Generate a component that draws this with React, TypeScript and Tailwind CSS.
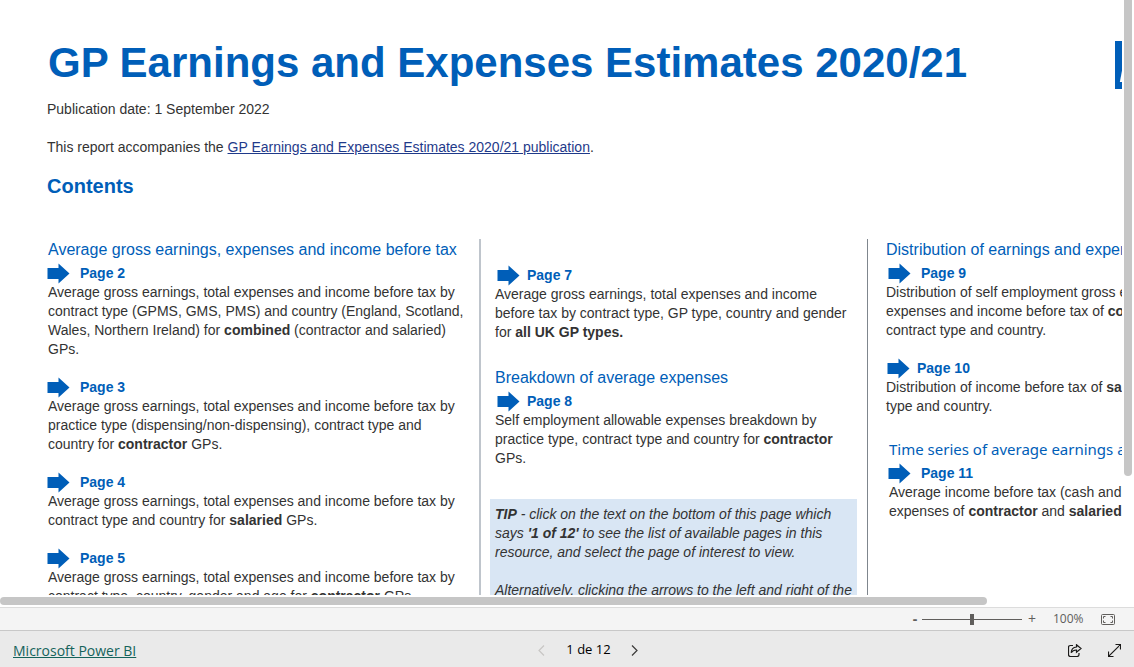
import type { ReactNode } from "react";

const Arrow = () => {
  return (
    <svg width="23" height="21" viewBox="0 0 23 21" aria-hidden="true" className="shrink-0">
      <path d="M0.5 5H11.5V0.5L22.5 10.5L11.5 20.5V16H0.5Z" fill="#005eb8" />
    </svg>
  );
};

const PageItem = ({ page, gap, children }: { page: number; gap: string; children: ReactNode }) => {
  return (
    <section>
      <button className={`flex h-[19px] items-center font-bold text-[#005eb8] ${gap}`}>
        <Arrow />
        <span>Page {page}</span>
      </button>
      <p>{children}</p>
    </section>
  );
};

const Report = () => {
  return (
    <main className="h-full w-[1280px] text-sm/[19px] text-[#333333]">
      <header className="flex justify-between pt-9 pl-12">
        <h1 className="text-[42px]/[54px] font-bold whitespace-nowrap text-[#005eb8]">
          GP Earnings and Expenses Estimates 2020/21
        </h1>
        <div className="mt-[5px] mr-11 h-12 w-[121px] bg-[#005eb8] pl-1 text-[50px]/[48px] font-bold text-white italic">
          NHS
        </div>
      </header>

      <div className="pt-[10px] pl-[47px]">
        <p>Publication date: 1 September 2022</p>
        <p className="mt-[19px]">
          This report accompanies the{" "}
          <a href="#publication" className="text-[#1f3a8a] underline">
            GP Earnings and Expenses Estimates 2020/21 publication
          </a>
          .
        </p>
        <h2 className="mt-4 text-xl/[26px] font-bold text-[#005eb8]">Contents</h2>
      </div>

      <div className="mt-10 grid h-[440px] grid-cols-[479px_388px_1fr] whitespace-nowrap">
        <div className="flex flex-col gap-[19px] pl-12">
          <div>
            <h3 className="mb-[5px] pt-px text-base/[19px] text-[#005eb8]">
              Average gross earnings, expenses and income before tax
            </h3>
            <PageItem page={2} gap="gap-[10px] -ml-px">
              Average gross earnings, total expenses and income before tax by
              <br />
              contract type (GPMS, GMS, PMS) and country (England, Scotland,
              <br />
              Wales, Northern Ireland) for <b>combined</b> (contractor and salaried)
              <br />
              GPs.
            </PageItem>
          </div>
          <PageItem page={3} gap="gap-[10px] -ml-px">
            Average gross earnings, total expenses and income before tax by
            <br />
            practice type (dispensing/non-dispensing), contract type and
            <br />
            country for <b>contractor</b> GPs.
          </PageItem>
          <PageItem page={4} gap="gap-[10px] -ml-px">
            Average gross earnings, total expenses and income before tax by
            <br />
            contract type and country for <b>salaried</b> GPs.
          </PageItem>
          <PageItem page={5} gap="gap-[10px] -ml-px">
            Average gross earnings, total expenses and income before tax by
            <br />
            contract type, country, gender and age for <b>contractor</b> GPs.
          </PageItem>
        </div>

        <div className="border-l-2 border-[#bfc5cc] pt-[27px] pl-[9px]">
          <div className="pl-[5px]">
            <PageItem page={7} gap="gap-[7px] ml-0.5">
              Average gross earnings, total expenses and income
              <br />
              before tax by contract type, GP type, country and gender
              <br />
              for <b>all UK GP types.</b>
            </PageItem>
            <h3 className="mt-[26px] mb-[5px] text-base/[19px] text-[#005eb8]">Breakdown of average expenses</h3>
            <PageItem page={8} gap="gap-[7px] ml-0.5">
              Self employment allowable expenses breakdown by
              <br />
              practice type, contract type and country for <b>contractor</b>
              <br />
              GPs.
            </PageItem>
          </div>
          <aside className="mt-[31px] mr-[10px] h-40 bg-[#d9e6f4] pt-[6px] pl-[5px] italic">
            <p>
              <b>TIP</b> - click on the text on the bottom of this page which
              <br />
              says <b>'1 of 12'</b> to see the list of available pages in this
              <br />
              resource, and select the page of interest to view.
            </p>
            <p className="mt-[19px]">
              Alternatively, clicking the arrows to the left and right of the
              <br />
              text will move between the pages.
            </p>
          </aside>
        </div>

        <div className="border-l border-[#7f868d] pl-[18px]">
          <h3 className="mb-[5px] pt-px text-base/[19px] text-[#005eb8]">
            Distribution of earnings and expenses
          </h3>
          <PageItem page={9} gap="gap-[10px] ml-0.5">
            Distribution of self employment gross earnings, total
            <br />
            expenses and income before tax of <b>contractor</b> GPs by
            <br />
            contract type and country.
          </PageItem>
          <div className="mt-[19px]">
            <PageItem page={10} gap="gap-[7px] ml-px">
              Distribution of income before tax of <b>salaried</b> GPs by contract
              <br />
              type and country.
            </PageItem>
          </div>
          <div className="mt-6 pl-[3px]">
            <h3 className="mb-[5px] font-['Noto_Sans',sans-serif] text-[15px]/[19px] text-[#005eb8]">
              Time series of average earnings and expenses
            </h3>
            <PageItem page={11} gap="gap-[10px] -ml-px">
              Average income before tax (cash and real terms) and
              <br />
              expenses of <b>contractor</b> and <b>salaried</b> GPs.
            </PageItem>
          </div>
        </div>
      </div>
    </main>
  );
};

const ZoomBar = () => {
  return (
    <div className="flex h-[23px] shrink-0 items-center justify-end border-t border-[#dcdcdc] bg-[#f4f4f4] pr-[19px] text-[#605e5c]">
      <button aria-label="Zoom out" className="w-[14px] text-center text-sm/[22px] font-bold">
        -
      </button>
      <input
        type="range"
        aria-label="Zoom"
        min={0}
        max={100}
        defaultValue={50}
        className="h-[11px] w-[100px] appearance-none bg-[linear-gradient(#605e5c,#605e5c)] bg-[length:100%_1px] bg-center bg-no-repeat [&::-webkit-slider-thumb]:h-[11px] [&::-webkit-slider-thumb]:w-1 [&::-webkit-slider-thumb]:appearance-none [&::-webkit-slider-thumb]:bg-[#605e5c]"
      />
      <button aria-label="Zoom in" className="w-5 text-center text-sm/[22px]">
        +
      </button>
      <span className="ml-[11px] w-12 text-xs/[22px]">100%</span>
      <button aria-label="Fit to page">
        <svg width="14" height="11" viewBox="0 0 14 11" fill="none" stroke="#605e5c">
          <rect x="0.5" y="0.5" width="13" height="10" rx="1" />
          <path d="M4.5 2.5H2.5V4.5M9.5 2.5H11.5V4.5M4.5 8.5H2.5V6.5M9.5 8.5H11.5V6.5" />
        </svg>
      </button>
    </div>
  );
};

const Footer = () => {
  return (
    <footer className="grid h-[37px] shrink-0 grid-cols-[1fr_auto_1fr] items-center border-t border-[#c8c8c8] bg-[#eaeaea] px-[13px] pt-0.5">
      <div>
        <a href="#powerbi" className="text-sm text-[#15635b] underline">
          Microsoft Power BI
        </a>
      </div>
      <nav className="ml-[42px] flex items-center text-[13px] font-medium text-black">
        <button aria-label="Previous page" disabled className="w-7">
          <svg width="7" height="11" viewBox="0 0 7 11" fill="none" stroke="#c8c6c4" strokeWidth="1.2">
            <path d="M6 0.5L1 5.5L6 10.5" />
          </svg>
        </button>
        <button>1 de 12</button>
        <button aria-label="Next page" className="ml-5">
          <svg width="7" height="11" viewBox="0 0 7 11" fill="none" stroke="#3b3a39" strokeWidth="1.2">
            <path d="M1 0.5L6 5.5L1 10.5" />
          </svg>
        </button>
      </nav>
      <div className="flex items-center justify-end gap-[26px]">
        <button aria-label="Share">
          <svg width="14" height="13" viewBox="0 0 14 13" fill="none" stroke="#1b1a19" strokeWidth="1.2">
            <path d="M5 1.5H2.5Q0.5 1.5 0.5 3.5V10.5Q0.5 12.5 2.5 12.5H9Q11 12.5 11 10.5V9" />
            <path d="M8.5 0.8L13 4.5L8.5 8.2V6Q5 5.8 3.2 8.8Q3.4 3.4 8.5 3Z" />
          </svg>
        </button>
        <button aria-label="Full screen">
          <svg width="13" height="13" viewBox="0 0 13 13" fill="none" stroke="#1b1a19" strokeWidth="1.2">
            <path d="M0.8 12.2L12.2 0.8M7.5 0.5H12.5V5.5M0.5 7.5V12.5H5.5" />
          </svg>
        </button>
      </div>
    </footer>
  );
};

const App = () => {
  return (
    <div className="flex h-screen flex-col bg-white font-['Open_Sans','Noto_Sans',sans-serif]">
      <div className="grid min-h-0 flex-1 grid-cols-[minmax(0,1fr)_12px] grid-rows-[minmax(0,1fr)_12px]">
        <div className="overflow-hidden font-['Liberation_Sans',Arial,sans-serif]">
          <Report />
        </div>
        <div className="px-0.5">
          <div className="h-4/5 rounded-b-full bg-[#c6c6c6]" />
        </div>
        <div className="py-0.5">
          <div className="h-2 w-[88%] rounded-full bg-[#c6c6c6]" />
        </div>
      </div>
      <ZoomBar />
      <Footer />
    </div>
  );
};

export default App;
